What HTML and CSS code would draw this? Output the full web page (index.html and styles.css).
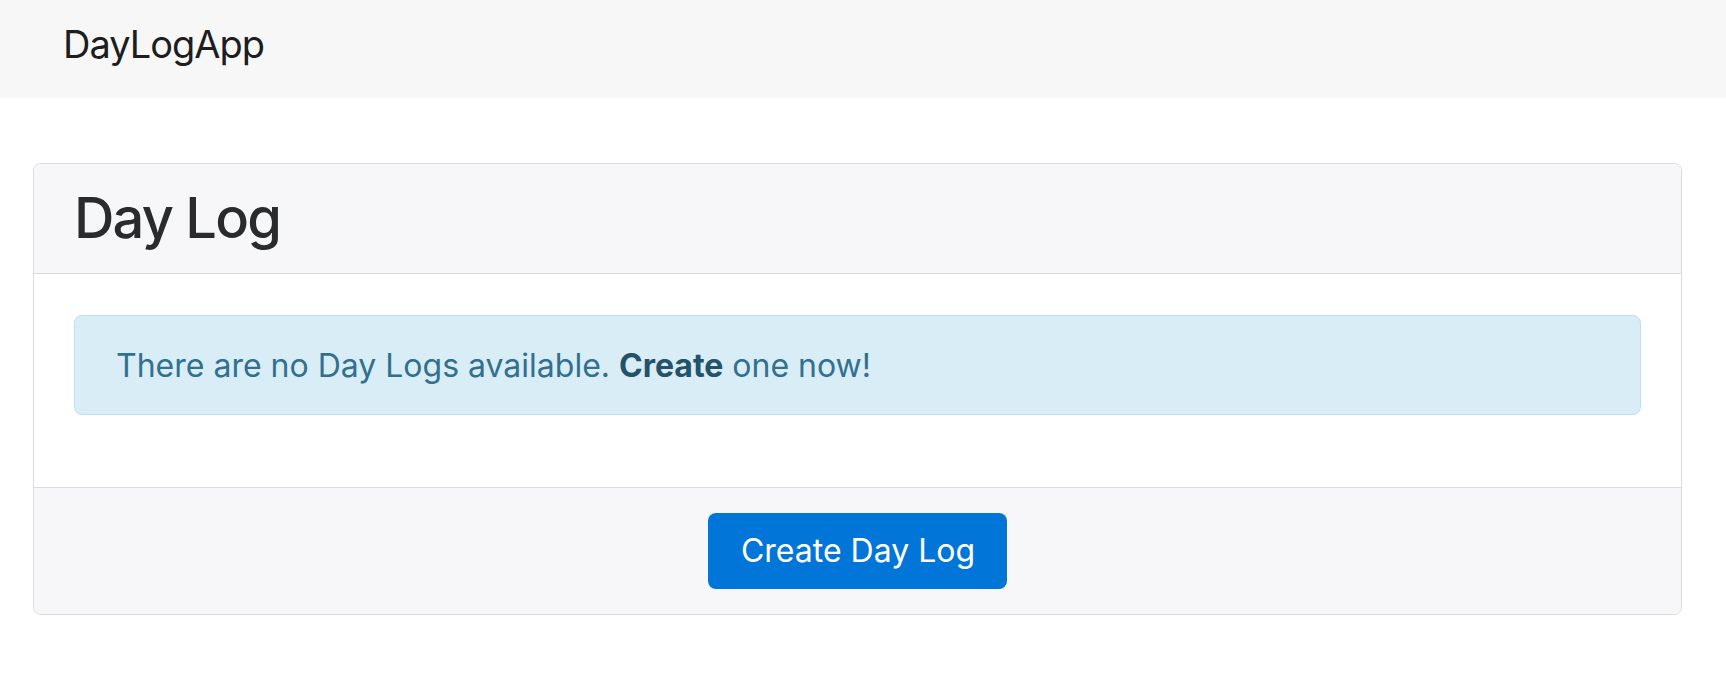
FILE: index.html
```html
<!DOCTYPE html>
<html lang="en">
<head>
<meta charset="utf-8">
<title>DayLogApp</title>
<link rel="stylesheet" href="styles.css">
</head>
<body>
<nav class="navbar">
  <a class="brand" href="#">DayLogApp</a>
</nav>
<main class="page">
  <section class="card">
    <header class="card-header">
      <h1 class="card-title">Day Log</h1>
    </header>
    <div class="card-body">
      <div class="alert">There are no Day Logs available. <strong>Create</strong> one now!</div>
    </div>
    <footer class="card-footer">
      <button class="btn" type="button">Create Day Log</button>
    </footer>
  </section>
</main>
</body>
</html>
```

FILE: styles.css
```css
* { box-sizing: border-box; }
html, body { margin: 0; padding: 0; }
body {
  font-family: Inter, "Noto Sans", "Liberation Sans", sans-serif;
  font-size: 32px;
  line-height: 48px;
  color: #292b2c;
  background: #fff;
}
.navbar {
  height: 98px;
  background: #f7f7f7;
  padding: 20px 0 0 63px;
}
.brand {
  font-size: 38px;
  line-height: 48px;
  letter-spacing: -1px;
  color: rgba(0,0,0,.9);
  text-decoration: none;
}
.page {
  margin: 65px 44px 0 33px;
}
.card {
  border: 1px solid #dbdbdb;
  border-radius: 8px;
  overflow: hidden;
}
.card-header {
  background: #f7f7f9;
  padding: 22px 40px 23px;
  border-bottom: 1px solid #dbdbdb;
}
.card-title {
  margin: 0;
  font-size: 56px;
  line-height: 64px;
  font-weight: 500;
  letter-spacing: -1.8px;
  color: #292b2c;
}
.card-body {
  padding: 41px 40px 40px;
}
.alert {
  margin-bottom: 32px;
  padding: 26px 41px 24px;
  background: #d9edf7;
  border: 1px solid #bcdff1;
  border-radius: 8px;
  color: #31708f;
}
.alert strong { color: #245269; font-weight: 700; }
.card-footer {
  background: #f7f7f9;
  border-top: 1px solid #dbdbdb;
  padding: 25px 0 25px;
  display: flex;
  justify-content: center;
}
.btn {
  font-family: inherit;
  font-size: 32px;
  line-height: 48px;
  padding: 14px 32px 14px 33px;
  color: #fff;
  background: #0275d8;
  border: 0;
  border-radius: 8px;
  cursor: pointer;
}
```
